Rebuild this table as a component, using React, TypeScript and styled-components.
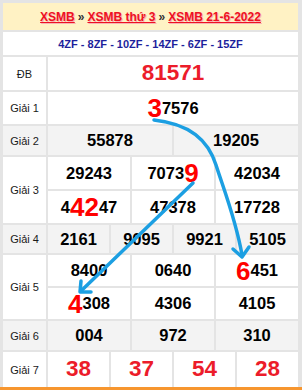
import React from "react";
import styled, { createGlobalStyle } from "styled-components";

const Global = createGlobalStyle`
  html, body { margin: 0; padding: 0; background: #fff; }
  body { font-family: "Liberation Sans", Arial, sans-serif; }
`;

const Board = styled.div`
  position: relative;
  width: 302px;
  box-sizing: border-box;
  background: #e4e4e4;
  padding: 3px 4px 0 3px;
  border-bottom: 3px solid #f7962f;
  display: flex;
  flex-direction: column;
  gap: 2px;
`;

const HeaderRow = styled.div`
  height: 27px;
  background: #fff2c4;
  display: flex;
  align-items: center;
  justify-content: center;
  font-size: 12px;
  font-weight: bold;
  white-space: nowrap;
`;

const Crumb = styled.a`
  color: #ee1122;
  text-decoration: underline;
  text-shadow: 1px 1px 0 #f7b3b3;
`;

const Sep = styled.span`
  color: #333;
  margin: 0 3px;
`;

const ZfRow = styled.div`
  height: 23px;
  background: #fff;
  display: flex;
  align-items: center;
  justify-content: center;
  font-size: 11px;
  font-weight: bold;
  color: #1d1f9c;
  white-space: nowrap;
`;

const Prize = styled.div`
  display: grid;
  grid-template-columns: 43px 1fr;
  gap: 2px;
`;

const Label = styled.div<{ $alt: boolean }>`
  background: ${(p) => (p.$alt ? "#f3f3f3" : "#fff")};
  display: flex;
  align-items: center;
  justify-content: center;
  font-size: 11px;
  color: #1a1a1a;
  white-space: nowrap;
`;

const Nums = styled.div<{ $cols: number; $h: number }>`
  display: grid;
  grid-template-columns: repeat(${(p) => p.$cols}, 1fr);
  grid-auto-rows: ${(p) => p.$h}px;
  gap: 2px;
`;

const NumCell = styled.div<{ $alt: boolean }>`
  background: ${(p) => (p.$alt ? "#f3f3f3" : "#fff")};
  display: flex;
  align-items: center;
  justify-content: center;
  font-size: 16.5px;
  font-weight: bold;
  color: #000;
  line-height: 1;
  white-space: nowrap;
`;

const Big = styled.span`
  color: #ff0000;
  font-size: 26px;
  font-weight: bold;
`;

const RedNum = styled.span`
  color: #ec1c2a;
  font-size: 22.5px;
  font-weight: bold;
`;

const Overlay = styled.svg`
  position: absolute;
  left: 0;
  top: 0;
  width: 302px;
  height: 390px;
  pointer-events: none;
`;

type Row = { label: string; cols: number; h: number; nums: string[]; red?: boolean };

const rows: Row[] = [
  { label: "ĐB", cols: 1, h: 33, nums: ["81571"], red: true },
  { label: "Giải 1", cols: 1, h: 32, nums: ["[3]7576"] },
  { label: "Giải 2", cols: 2, h: 29, nums: ["55878", "19205"] },
  { label: "Giải 3", cols: 3, h: 32, nums: ["29243", "7073[9]", "42034", "4[42]47", "47378", "17728"] },
  { label: "Giải 4", cols: 4, h: 28, nums: ["2161", "9095", "9921", "5105"] },
  { label: "Giải 5", cols: 3, h: 31, nums: ["8400", "0640", "[6]451", "[4]308", "4306", "4105"] },
  { label: "Giải 6", cols: 3, h: 29, nums: ["004", "972", "310"] },
  { label: "Giải 7", cols: 4, h: 35, nums: ["38", "37", "54", "28"], red: true },
];

function renderNum(s: string, red?: boolean) {
  if (red) return <RedNum>{s}</RedNum>;
  const parts = s.split(/(\[[^\]]+\])/).filter(Boolean);
  return parts.map((p, i) =>
    p.startsWith("[") ? <Big key={i}>{p.slice(1, -1)}</Big> : <span key={i}>{p}</span>
  );
}

export default function App() {
  return (
    <>
      <Global />
      <Board>
        <HeaderRow>
          <Crumb>XSMB</Crumb>
          <Sep>»</Sep>
          <Crumb>XSMB thứ 3</Crumb>
          <Sep>»</Sep>
          <Crumb>XSMB 21-6-2022</Crumb>
        </HeaderRow>
        <ZfRow>4ZF - 8ZF - 10ZF - 14ZF - 6ZF - 15ZF</ZfRow>
        {rows.map((r, i) => {
          const alt = i === 2 || i === 4 || i === 6;
          return (
            <Prize key={r.label}>
              <Label $alt={alt}>{r.label}</Label>
              <Nums $cols={r.cols} $h={r.h}>
                {r.nums.map((n, j) => (
                  <NumCell key={j} $alt={alt}>
                    {renderNum(n, r.red)}
                  </NumCell>
                ))}
              </Nums>
            </Prize>
          );
        })}
        <Overlay viewBox="0 0 302 390">
          <g fill="none" stroke="#1c9fe2" strokeWidth={3.5} strokeLinecap="round" strokeLinejoin="round">
            <path d="M154,120 C190,124 208,140 216,165 C224,190 236,220 242,255" />
            <path d="M233,249 L242,257 L249,247" />
            <path d="M193,183 L81,291" />
            <path d="M81,281 L80,292 L91,292" />
          </g>
        </Overlay>
      </Board>
    </>
  );
}
